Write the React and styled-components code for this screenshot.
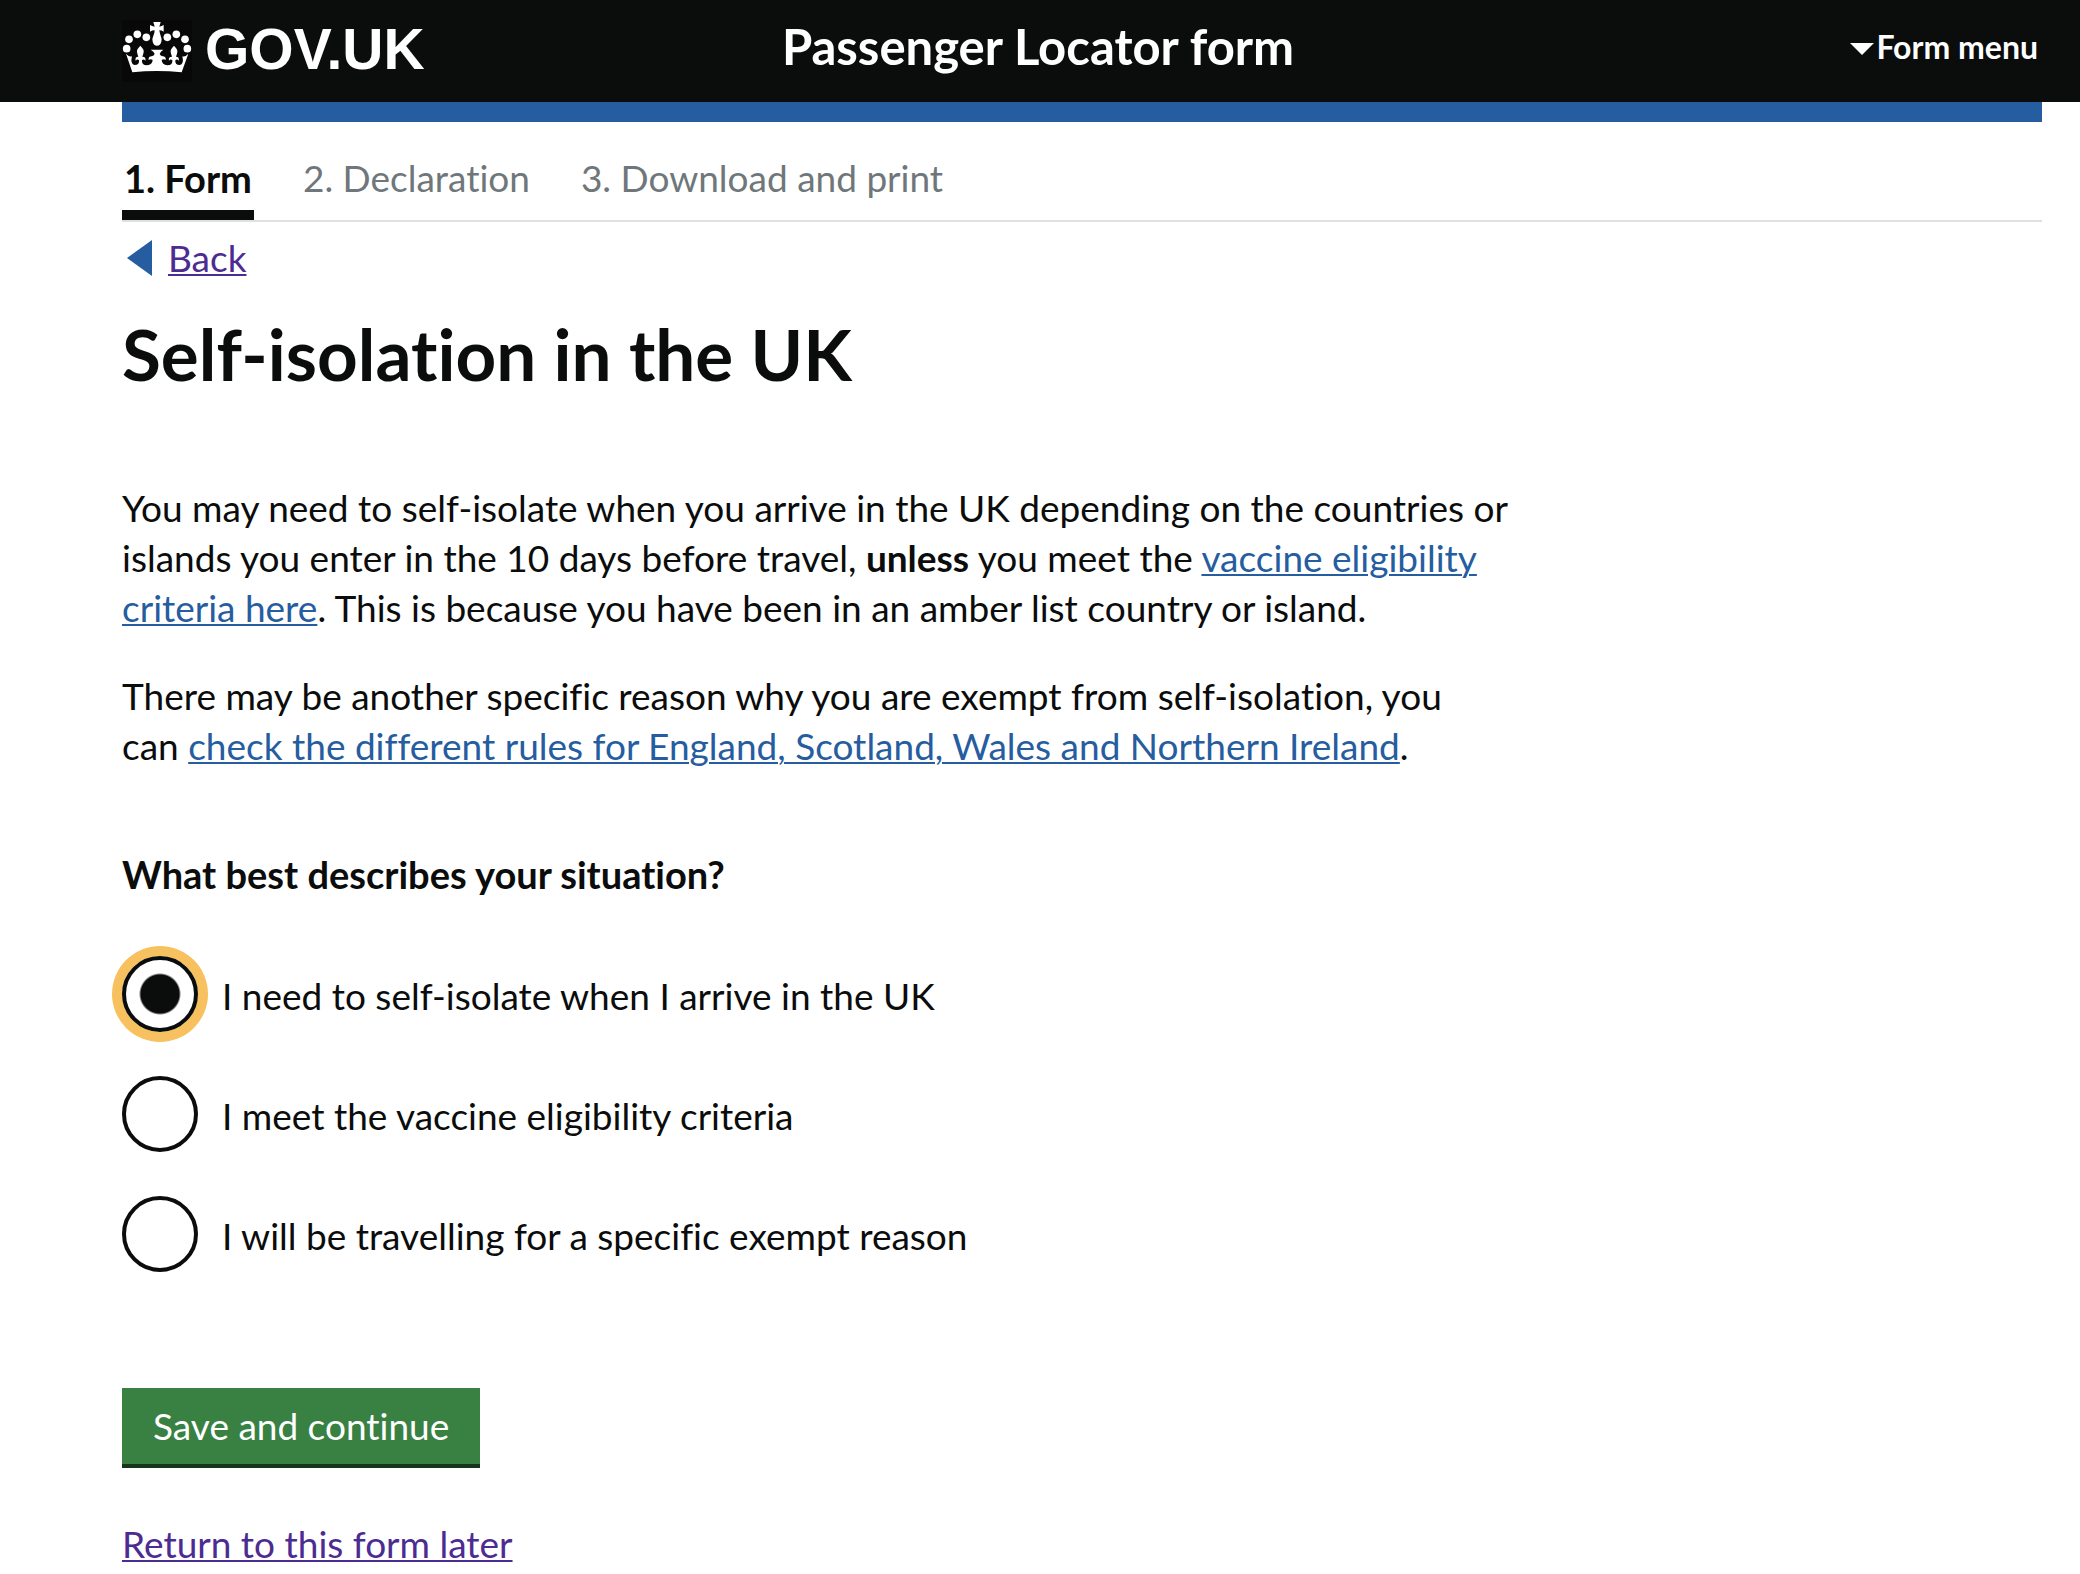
import React, { useState } from "react";
import styled, { createGlobalStyle } from "styled-components";

const ink = "#0b0c0c";
const blue = "#265da0";
const purple = "#4c2c92";

const GlobalStyle = createGlobalStyle`
  *, *::before, *::after { box-sizing: border-box; }
  body {
    margin: 0;
    background: #fff;
    color: ${ink};
    font-family: Lato, "Open Sans", sans-serif;
    font-size: 37px;
    font-variant-ligatures: none;
    line-height: 50px;
  }
  h1, h2, p, ol, fieldset { margin: 0; padding: 0; border: 0; }
  strong { line-height: 1; }
`;

const Header = styled.header`
  display: grid;
  grid-template-columns: 1fr auto 1fr;
  align-items: center;
  height: 102px;
  background: ${ink};
  color: #fff;
`;

const Brand = styled.a`
  display: flex;
  align-items: center;
  gap: 13px;
  padding-left: 122px;
  color: #fff;
  text-decoration: none;
  font-family: "Liberation Sans", Arial, sans-serif;
  font-size: 57px;
  font-weight: 700;
  line-height: 64px;
`;

const BrandName = styled.span`
  padding-bottom: 4px;
`;

const Crown = styled.svg`
  width: 70px;
  height: 62px;
  flex: none;
`;

const ServiceName = styled.div`
  font-size: 49px;
  font-weight: 700;
  line-height: 60px;
  padding: 0 4px 10px 0;
`;

const MenuButton = styled.button`
  display: flex;
  align-items: center;
  justify-self: end;
  gap: 2px;
  margin: 0 42px 8px 0;
  padding: 0;
  border: 0;
  background: none;
  color: #fff;
  font: inherit;
  font-size: 32px;
  font-weight: 700;
  line-height: 40px;
`;

const MenuArrow = styled.svg`
  width: 24px;
  height: 12px;
  margin-top: 4px;
`;

const Page = styled.div`
  margin: 0 38px 0 122px;
`;

const BlueBar = styled.div`
  height: 20px;
  background: ${blue};
`;

const Steps = styled.ol`
  display: flex;
  gap: 47px;
  height: 100px;
  padding-top: 31px;
  border-bottom: 2px solid #dee0e2;
  list-style: none;
`;

const Step = styled.li`
  height: 67px;
  padding: 0 2px;
  color: ${(p) => (p.$current ? ink : "#6f777b")};
  font-size: ${(p) => (p.$current ? "38px" : "37px")};
  font-weight: ${(p) => (p.$current ? 700 : 400)};
  border-bottom: ${(p) => (p.$current ? `10px solid ${ink}` : "0")};
`;

const BackRow = styled.nav`
  display: flex;
  align-items: center;
  gap: 15px;
  padding: 11px 0 0 5px;
`;

const BackArrow = styled.svg`
  width: 26px;
  height: 36px;
`;

const Link = styled.a`
  color: ${(p) => (p.$visited ? purple : blue)};
  text-decoration: underline;
  text-decoration-thickness: 2px;
  text-underline-offset: 2px;
`;

const Title = styled.h1`
  padding-top: 31px;
  font-size: 71px;
  font-weight: 700;
  line-height: 80px;
`;

const Intro = styled.div`
  display: grid;
  gap: 38px;
  width: 73%;
  padding-top: 89px;
`;

const Legend = styled.legend`
  padding: 78px 0 0;
  font-size: 38px;
  font-weight: 700;
`;

const Options = styled.div`
  display: grid;
  gap: 44px;
  padding-top: 57px;
`;

const Option = styled.label`
  display: flex;
  align-items: center;
  gap: 24px;
`;

const Radio = styled.input`
  appearance: none;
  flex: none;
  width: 76px;
  height: 76px;
  margin: 0;
  border: 4px solid ${ink};
  border-radius: 50%;
  background: #fff;
  &:checked {
    background: radial-gradient(circle, ${ink} 19px, #fff 21px);
    box-shadow: 0 0 0 10px #f7c160;
  }
`;

const OptionText = styled.span`
  padding-top: 4px;
`;

const SaveButton = styled.button`
  display: block;
  height: 80px;
  margin: 116px 0 51px;
  padding: 0 31px;
  border: 0;
  border-bottom: 4px solid #16351c;
  background: #398143;
  color: #fff;
  font: inherit;
  font-variant-ligatures: none;
`;

const options = [
  "I need to self-isolate when I arrive in the UK",
  "I meet the vaccine eligibility criteria",
  "I will be travelling for a specific exempt reason",
];

function CrownIcon() {
  const beads = [
    [35, 116], [42, 88], [67, 73], [94, 82],
    [157, 82], [184, 73], [210, 88], [217, 116],
  ];
  return (
    <Crown viewBox="21 30 210 186" aria-hidden="true">
      <rect x="21" y="30" width="210" height="186" fill="#080808" />
      <g fill="#fff">
        {beads.map(([x, y]) => (
          <circle key={x} cx={x} cy={y} r="11.5" />
        ))}
        <path d="M115 36h22l-4 14q7-1 13-5v20q-6-4-13-4q1 8 4 16q4 8 2 18q-3 12-13 12t-13-12q-2-10 2-18q4-8 4-16q-8 0-14 4V45q6 4 14 5z" />
        <path d="M33 131q10 11 18 8q-6 24 8 26q15 0 13-14q-5-5-10 1q-3-12 8-12q-3-7-4-14q-2-7 10-19q12 12 10 19q-1 7-4 14q12 0 9 12q-5-6-10-1q-2 15 15 15q16-1 17-16q-6-5-12 0q-2-10 9-11q7-1 9-7q-2-8-12-13h38q-9 5-11 13q2 6 9 7q11 1 9 11q-6-5-12 0q1 15 17 16q17 0 15-15q-5-5-10 1q-3-12 9-12q-3-7-4-14q-2-7 10-19q12 12 10 19q-1 7-4 14q11 0 8 12q-5-6-10-1q-2 14 13 14q14-2 8-26q8 3 18-8L200 187Q125 179 52 187z" />
      </g>
    </Crown>
  );
}

export default function App() {
  const [choice, setChoice] = useState(0);
  return (
    <>
      <GlobalStyle />
      <Header>
        <Brand href="#">
          <CrownIcon />
          <BrandName>GOV.UK</BrandName>
        </Brand>
        <ServiceName>Passenger Locator form</ServiceName>
        <MenuButton type="button">
          <MenuArrow viewBox="0 0 24 12" aria-hidden="true">
            <path d="M0 0h24L12 12z" fill="#fff" />
          </MenuArrow>
          Form menu
        </MenuButton>
      </Header>
      <Page>
        <BlueBar />
        <Steps>
          <Step $current aria-current="step">1. Form</Step>
          <Step>2. Declaration</Step>
          <Step>3. Download and print</Step>
        </Steps>
        <BackRow>
          <BackArrow viewBox="0 0 26 36" aria-hidden="true">
            <path d="M0 18L25 0v36z" fill={blue} />
          </BackArrow>
          <Link href="#" $visited>Back</Link>
        </BackRow>
        <main>
          <Title>Self-isolation in the UK</Title>
          <Intro>
            <p>
              You may need to self-isolate when you arrive in the UK depending on the countries or
              islands you enter in the 10 days before travel, <strong>unless</strong> you meet the{" "}
              <Link href="#">vaccine eligibility criteria here</Link>. This is because you have been
              in an amber list country or island.
            </p>
            <p>
              There may be another specific reason why you are exempt from self-isolation, you
              can{"\u00a0"}
              <Link href="#">
                check the different rules for England, Scotland, Wales and Northern Ireland
              </Link>
              .
            </p>
          </Intro>
          <form onSubmit={(e) => e.preventDefault()}>
            <fieldset>
              <Legend>What best describes your situation?</Legend>
              <Options>
                {options.map((text, i) => (
                  <Option key={text}>
                    <Radio
                      type="radio"
                      name="situation"
                      checked={choice === i}
                      onChange={() => setChoice(i)}
                    />
                    <OptionText>{text}</OptionText>
                  </Option>
                ))}
              </Options>
            </fieldset>
            <SaveButton type="submit">Save and continue</SaveButton>
          </form>
          <Link href="#" $visited>Return to this form later</Link>
        </main>
      </Page>
    </>
  );
}
